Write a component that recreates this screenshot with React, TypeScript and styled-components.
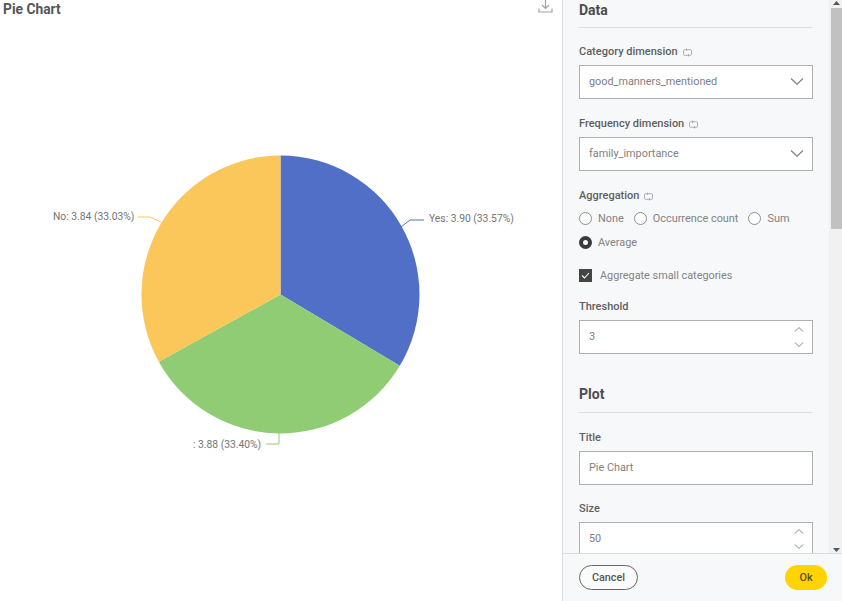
import React from "react";
import styled, { createGlobalStyle } from "styled-components";

const Global = createGlobalStyle`
  html, body { margin: 0; padding: 0; background: #fff; }
  body { font-family: Roboto, "Liberation Sans", sans-serif; overflow: hidden; }
`;

const Page = styled.div`
  display: flex;
  width: 842px;
  height: 601px;
  overflow: hidden;
`;

const ChartArea = styled.main`
  width: 562px;
  flex: none;
  display: flex;
  flex-direction: column;
`;

const ChartHeader = styled.header`
  display: flex;
  justify-content: space-between;
  align-items: flex-start;
  height: 36px;
  padding: 0 9px 0 3px;
`;

const ChartTitle = styled.h1`
  margin: 1px 0 0;
  font-size: 13.8px;
  line-height: 17px;
  font-weight: 700;
  color: #555;
`;

const DownloadButton = styled.span`
  display: block;
  width: 15px;
  height: 15px;
  margin-top: -1px;
  color: #a3a3a3;
`;

const ChartLabel = styled.text`
  font-family: Roboto, "Liberation Sans", sans-serif;
  font-size: 10.3px;
  fill: #747474;
`;

const Panel = styled.aside`
  width: 280px;
  flex: none;
  display: flex;
  flex-direction: column;
  background: #f7f8fa;
  border-left: 1px solid #dcdcdc;
  box-sizing: border-box;
`;

const PanelBody = styled.div`
  height: 553px;
  flex: none;
  display: flex;
  overflow: hidden;
`;

const Form = styled.div`
  width: 266px;
  flex: none;
  box-sizing: border-box;
  padding: 0 17px 0 16px;
`;

const SectionTitle = styled.h2<{ $first?: boolean }>`
  margin: ${(p) => (p.$first ? "2px" : "32px")} 0 0;
  padding-bottom: ${(p) => (p.$first ? "8px" : "9px")};
  border-bottom: 1px solid #dcdedf;
  font-size: 14px;
  line-height: 17px;
  font-weight: 700;
  color: #4c4c4c;
`;

const Field = styled.div<{ $gap?: number }>`
  margin-top: ${(p) => p.$gap ?? 17}px;
`;

const FieldLabel = styled.div`
  display: flex;
  align-items: center;
  gap: 5px;
  height: 14px;
  padding-top: 1px;
  margin-bottom: 6px;
  font-size: 11px;
  line-height: 14px;
  font-weight: 500;
  color: #5f5f5f;
`;

const LinkGlyph = styled.svg`
  width: 9px;
  height: 9px;
  color: #a8a8a8;
`;

const InputBox = styled.div`
  display: flex;
  align-items: center;
  justify-content: space-between;
  box-sizing: border-box;
  width: 234px;
  height: 34px;
  padding: 0 8px 1px 9px;
  background: #fff;
  border: 1px solid #b0b0b0;
  font-size: 10.85px;
  color: #808080;
`;

const Stepper = styled.div`
  display: flex;
  flex-direction: column;
  gap: 10px;
  color: #777;
`;

const RadioGroup = styled.div`
  display: flex;
  flex-wrap: wrap;
  column-gap: 10px;
  row-gap: 11px;
  width: 233px;
  margin-top: 9px;
`;

const RadioItem = styled.label`
  display: flex;
  align-items: center;
  gap: 6px;
  height: 13px;
  font-size: 10.9px;
  color: #828282;
`;

const RadioDot = styled.span<{ $on?: boolean }>`
  display: block;
  box-sizing: border-box;
  width: 13px;
  height: 13px;
  border-radius: 50%;
  background: #fff;
  border: ${(p) => (p.$on ? "4.5px solid #3a3a3a" : "1px solid #8e8e8e")};
`;

const CheckRow = styled.label`
  display: flex;
  align-items: center;
  gap: 8px;
  height: 13px;
  margin-top: 20px;
  font-size: 10.85px;
  color: #828282;
`;

const CheckBox = styled.span`
  display: flex;
  align-items: center;
  justify-content: center;
  width: 13px;
  height: 13px;
  background: #444;
  color: #fff;
`;

const ScrollTrack = styled.div`
  width: 13px;
  flex: none;
  display: flex;
  flex-direction: column;
  align-items: flex-end;
  background: #f1f1f1;
`;

const ScrollArrow = styled.svg`
  width: 7px;
  height: 7px;
  flex: none;
  margin-right: 2px;
  color: #555;
`;

const ScrollThumb = styled.div`
  width: 11px;
  height: 221px;
  margin-top: 1px;
  background: #c1c1c1;
`;

const ScrollSpacer = styled.div`
  flex: 1;
`;

const Footer = styled.footer`
  flex: 1;
  display: flex;
  align-items: center;
  justify-content: space-between;
  padding: 0 15px 1px 16px;
  background: #f7f8fa;
  border-top: 1px solid #dcdcdc;
`;

const CancelButton = styled.button`
  width: 59px;
  height: 25px;
  padding: 0;
  border: 1px solid #666;
  border-radius: 13px;
  background: #fbfbfc;
  font: 500 10.8px Roboto, "Liberation Sans", sans-serif;
  color: #555;
`;

const OkButton = styled.button`
  width: 42px;
  height: 25px;
  padding: 0;
  border: none;
  border-radius: 13px;
  background: #ffd400;
  font: 500 10.8px Roboto, "Liberation Sans", sans-serif;
  color: #5a5020;
`;

const Chevron = ({ size = 14, up = false }: { size?: number; up?: boolean }) => (
  <svg width={size} height={size / 2} viewBox="0 0 14 7" fill="none" stroke="currentColor" strokeWidth={1.2} style={{ display: "block" }}>
    <path d={up ? "M1 6.5 7 .8l6 5.7" : "M1 .5 7 6.2 13 .5"} />
  </svg>
);

const Link = () => (
  <LinkGlyph viewBox="0 0 9 9" fill="none" stroke="currentColor" strokeWidth={0.9}>
    <path d="M3.500 .5v2.500M5.500 6v2.500" />
    <rect x=".5" y="1.700" width="8" height="5.600" rx="1" />
  </LinkGlyph>
);

const slices = [
  { d: "M280.5 294.500V155.500A139 139 0 0 1 399.800 365.800Z", fill: "#526fc8" },
  { d: "M280.5 294.500 399.800 365.800A139 139 0 0 1 158.800 361.700Z", fill: "#8fcc74" },
  { d: "M280.5 294.500 158.800 361.700A139 139 0 0 1 280.5 155.500Z", fill: "#fbc65a" },
];

export default function App() {
  return (
    <Page>
      <Global />
      <ChartArea>
        <ChartHeader>
          <ChartTitle>Pie Chart</ChartTitle>
          <DownloadButton>
            <svg width="15" height="15" viewBox="0 0 15 15" fill="none" stroke="currentColor" strokeWidth={1.2}>
              <path d="M7.500 0v9.500M4 6 7.500 9.500 11 6M1 9.500v3.500h13V9.500" />
            </svg>
          </DownloadButton>
        </ChartHeader>
        <svg width="562" height="565" viewBox="0 36 562 565" style={{ display: "block" }}>
          {slices.map((s) => (
            <path key={s.fill} d={s.d} fill={s.fill} />
          ))}
          <path d="M401 227 410 220H424" fill="none" stroke="#526fc8" strokeWidth={1} />
          <path d="M279 433V444H266" fill="none" stroke="#8fcc74" strokeWidth={1} />
          <path d="M161 222 150 217H138" fill="none" stroke="#fbc65a" strokeWidth={1} />
          <ChartLabel x="429" y="222">Yes: 3.90 (33.57%)</ChartLabel>
          <ChartLabel x="193" y="448">: 3.88 (33.40%)</ChartLabel>
          <ChartLabel x="53" y="220">No: 3.84 (33.03%)</ChartLabel>
        </svg>
      </ChartArea>
      <Panel>
        <PanelBody>
          <Form>
            <SectionTitle $first>Data</SectionTitle>
            <Field $gap={16}>
              <FieldLabel>Category dimension <Link /></FieldLabel>
              <InputBox>good_manners_mentioned <Chevron /></InputBox>
            </Field>
            <Field>
              <FieldLabel>Frequency dimension <Link /></FieldLabel>
              <InputBox>family_importance <Chevron /></InputBox>
            </Field>
            <Field $gap={17}>
              <FieldLabel>Aggregation <Link /></FieldLabel>
              <RadioGroup>
                <RadioItem><RadioDot />None</RadioItem>
                <RadioItem><RadioDot />Occurrence count</RadioItem>
                <RadioItem><RadioDot />Sum</RadioItem>
                <RadioItem><RadioDot $on />Average</RadioItem>
              </RadioGroup>
            </Field>
            <CheckRow>
              <CheckBox>
                <svg width="9" height="9" viewBox="0 0 9 9" fill="none" stroke="currentColor" strokeWidth={1.1}>
                  <path d="M1 4.500 3.500 7 8 2" />
                </svg>
              </CheckBox>
              Aggregate small categories
            </CheckRow>
            <Field $gap={17}>
              <FieldLabel>Threshold</FieldLabel>
              <InputBox>3 <Stepper><Chevron size={10} up /><Chevron size={10} /></Stepper></InputBox>
            </Field>
            <SectionTitle>Plot</SectionTitle>
            <Field>
              <FieldLabel>Title</FieldLabel>
              <InputBox>Pie Chart</InputBox>
            </Field>
            <Field $gap={16}>
              <FieldLabel>Size</FieldLabel>
              <InputBox>50 <Stepper><Chevron size={10} up /><Chevron size={10} /></Stepper></InputBox>
            </Field>
          </Form>
          <ScrollTrack>
            <ScrollArrow viewBox="0 0 7 7" fill="currentColor"><path d="M0 5 3.500 1 7 5Z" /></ScrollArrow>
            <ScrollThumb />
            <ScrollSpacer />
            <ScrollArrow viewBox="0 0 7 7" fill="currentColor"><path d="M0 2 3.500 6 7 2Z" /></ScrollArrow>
          </ScrollTrack>
        </PanelBody>
        <Footer>
          <CancelButton>Cancel</CancelButton>
          <OkButton>Ok</OkButton>
        </Footer>
      </Panel>
    </Page>
  );
}
